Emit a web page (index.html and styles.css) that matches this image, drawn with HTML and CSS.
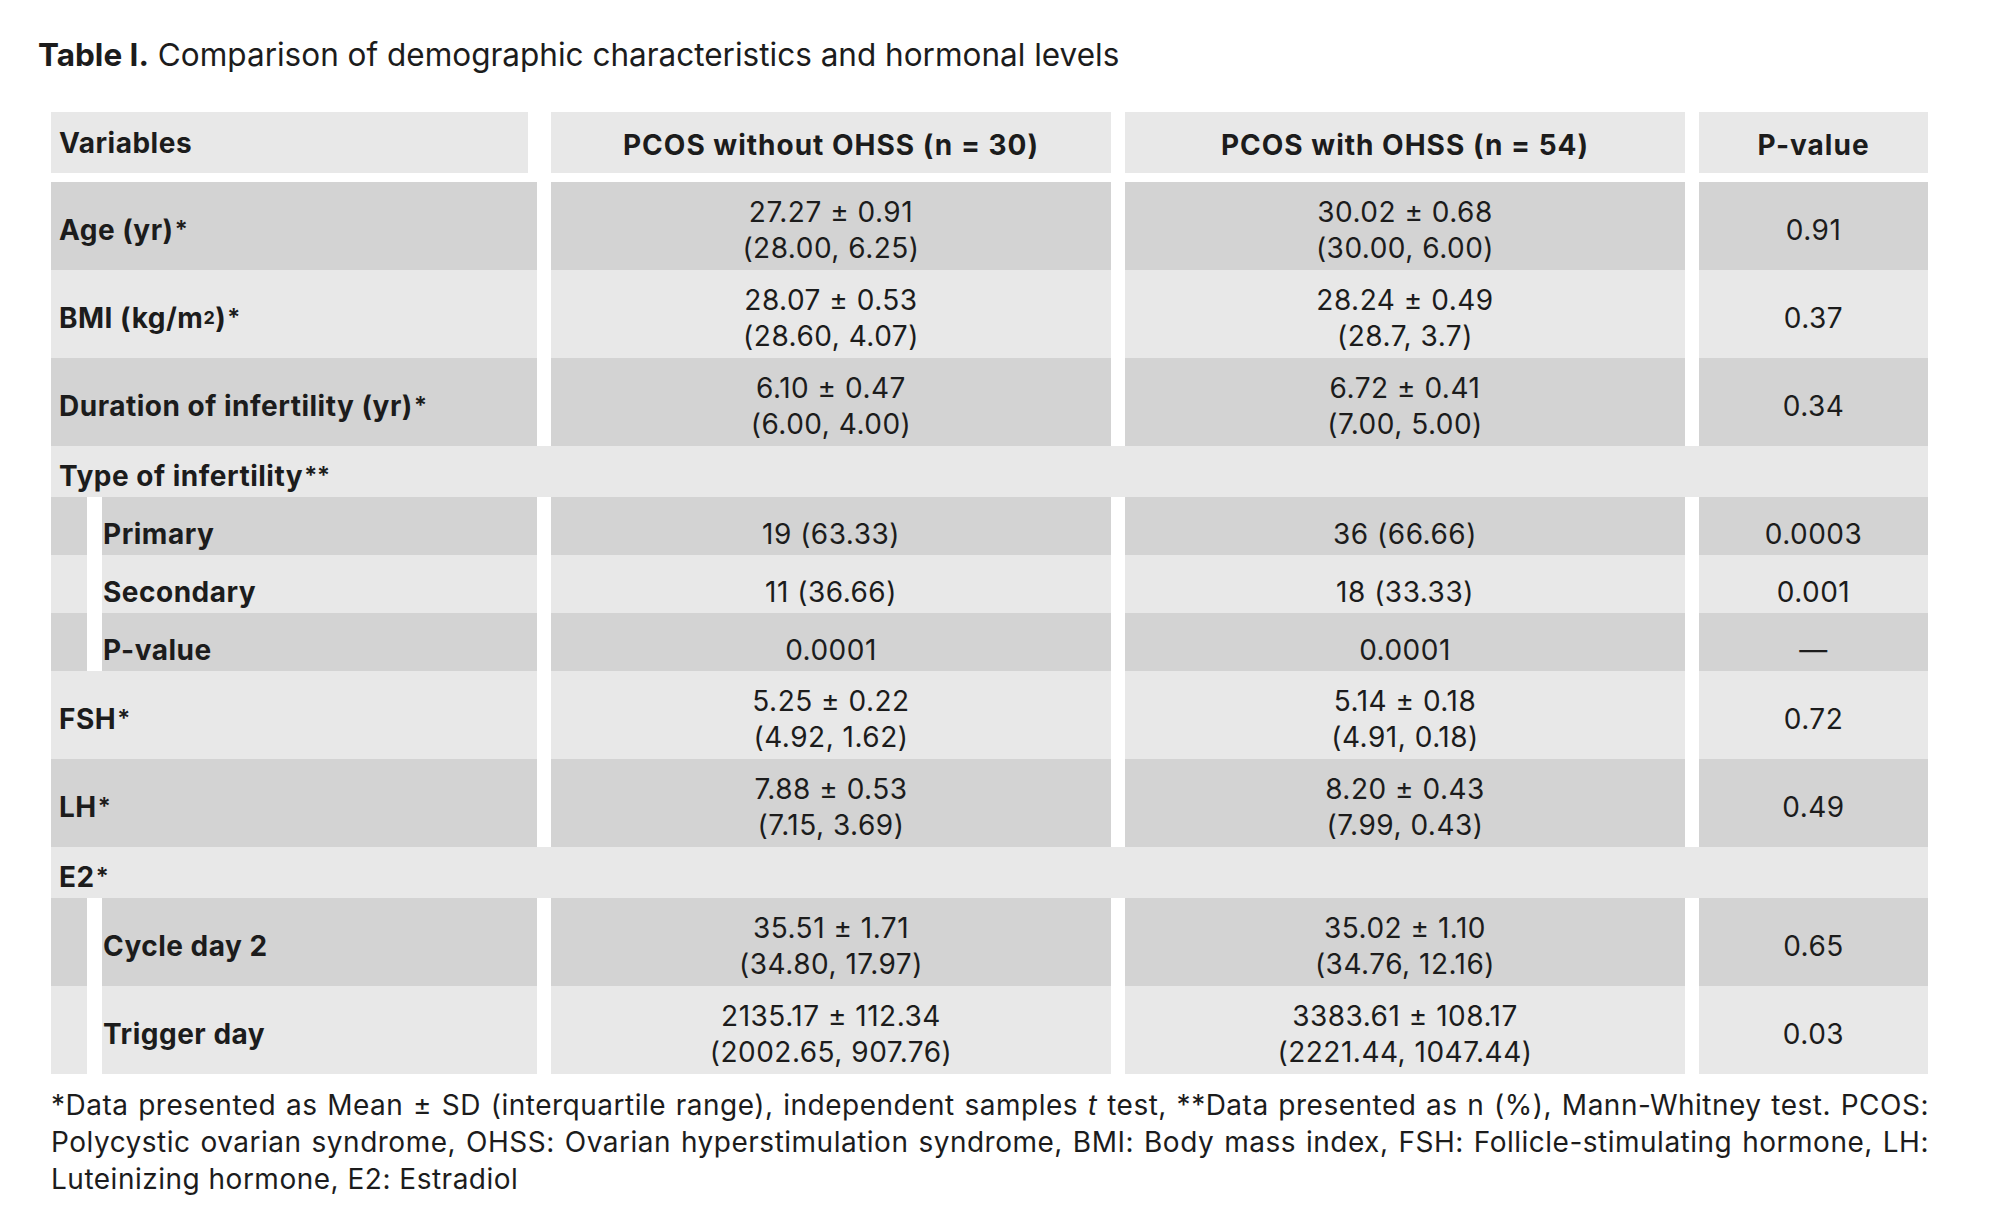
FILE: index.html
```html
<!DOCTYPE html>
<html lang="en">
<head>
<meta charset="utf-8">
<title>Table I</title>
<link rel="stylesheet" href="styles.css">
</head>
<body>
<div class="page">
  <h1 class="title"><b>Table I.</b> Comparison of demographic characteristics and hormonal levels</h1>
  <div class="tbl">
    <div class="row head">
      <div class="c c1">Variables</div>
      <div class="c">PCOS without OHSS (n = 30)</div>
      <div class="c">PCOS with OHSS (n = 54)</div>
      <div class="c">P-value</div>
    </div>
    <div class="row dark two">
      <div class="c c1">Age (yr)<span class="ast">*</span></div>
      <div class="c">27.27 ± 0.91<br>(28.00, 6.25)</div>
      <div class="c">30.02 ± 0.68<br>(30.00, 6.00)</div>
      <div class="c">0.91</div>
    </div>
    <div class="row light two">
      <div class="c c1">BMI (kg/m<sup>2</sup>)<span class="ast">*</span></div>
      <div class="c">28.07 ± 0.53<br>(28.60, 4.07)</div>
      <div class="c">28.24 ± 0.49<br>(28.7, 3.7)</div>
      <div class="c">0.37</div>
    </div>
    <div class="row dark two">
      <div class="c c1">Duration of infertility (yr)<span class="ast">*</span></div>
      <div class="c">6.10 ± 0.47<br>(6.00, 4.00)</div>
      <div class="c">6.72 ± 0.41<br>(7.00, 5.00)</div>
      <div class="c">0.34</div>
    </div>
    <div class="row light section">
      <div class="c c1 span">Type of infertility<span class="ast">**</span></div>
    </div>
    <div class="row dark sub">
      <div class="c c1 subcell"><span class="indent"></span><span class="lbl">Primary</span></div>
      <div class="c">19 (63.33)</div>
      <div class="c">36 (66.66)</div>
      <div class="c">0.0003</div>
    </div>
    <div class="row light sub">
      <div class="c c1 subcell"><span class="indent"></span><span class="lbl">Secondary</span></div>
      <div class="c">11 (36.66)</div>
      <div class="c">18 (33.33)</div>
      <div class="c">0.001</div>
    </div>
    <div class="row dark sub">
      <div class="c c1 subcell"><span class="indent"></span><span class="lbl">P-value</span></div>
      <div class="c">0.0001</div>
      <div class="c">0.0001</div>
      <div class="c">—</div>
    </div>
    <div class="row light two">
      <div class="c c1">FSH<span class="ast">*</span></div>
      <div class="c">5.25 ± 0.22<br>(4.92, 1.62)</div>
      <div class="c">5.14 ± 0.18<br>(4.91, 0.18)</div>
      <div class="c">0.72</div>
    </div>
    <div class="row dark two">
      <div class="c c1">LH<span class="ast">*</span></div>
      <div class="c">7.88 ± 0.53<br>(7.15, 3.69)</div>
      <div class="c">8.20 ± 0.43<br>(7.99, 0.43)</div>
      <div class="c">0.49</div>
    </div>
    <div class="row light section">
      <div class="c c1 span">E2<span class="ast">*</span></div>
    </div>
    <div class="row dark two">
      <div class="c c1 subcell"><span class="indent"></span><span class="lbl">Cycle day 2</span></div>
      <div class="c">35.51 ± 1.71<br>(34.80, 17.97)</div>
      <div class="c">35.02 ± 1.10<br>(34.76, 12.16)</div>
      <div class="c">0.65</div>
    </div>
    <div class="row light two">
      <div class="c c1 subcell"><span class="indent"></span><span class="lbl">Trigger day</span></div>
      <div class="c">2135.17 ± 112.34<br>(2002.65, 907.76)</div>
      <div class="c">3383.61 ± 108.17<br>(2221.44, 1047.44)</div>
      <div class="c">0.03</div>
    </div>
  </div>
  <p class="note">*Data presented as Mean ± SD (interquartile range), independent samples <span class="it">t</span> test, **Data presented as n (%), Mann-Whitney test. PCOS: Polycystic ovarian syndrome, OHSS: Ovarian hyperstimulation syndrome, BMI: Body mass index, FSH: Follicle-stimulating hormone, LH: Luteinizing hormone, E2: Estradiol</p>
</div>
</body>
</html>
```

FILE: styles.css
```css
html, body {
  margin: 0;
  padding: 0;
  background: #ffffff;
}

body {
  font-family: "Inter", "Liberation Sans", sans-serif;
  color: #1c1c1c;
  width: 2000px;
  height: 1216px;
  overflow: hidden;
}

.page {
  padding: 35px 71px 0 51px;
}

.title {
  margin: 0 0 37px -13px;
  font-size: 31.5px;
  font-weight: 400;
  line-height: 40px;
}

.title b {
  font-weight: 700;
}

.tbl {
  display: flex;
  flex-direction: column;
  width: 1878px;
}

.row {
  display: grid;
  grid-template-columns: 486px 560px 560px 229px;
  column-gap: 14px;
  --bg: #e8e8e8;
}

.row.dark {
  --bg: #d3d3d3;
}

.row.light,
.row.head {
  --bg: #e8e8e8;
}

.c {
  background: var(--bg);
  display: flex;
  align-items: center;
  justify-content: center;
  text-align: center;
  font-size: 28px;
  letter-spacing: 0.5px;
  line-height: 36px;
  padding-top: 8px;
}

.c1 {
  justify-content: flex-start;
  text-align: left;
  padding-left: 8px;
  font-weight: 700;
}

.head {
  height: 61px;
  margin-bottom: 9px;
}

.head .c {
  font-weight: 700;
  letter-spacing: 1px;
  padding-top: 5px;
}

.head .c1 {
  margin-right: 9px;
  padding-top: 0;
  letter-spacing: 0.5px;
}

.two {
  height: 88px;
}

.sub {
  height: 58px;
}

.sub .c {
  padding-top: 16px;
}

.section {
  height: 51px;
}

.section .span {
  grid-column: 1 / -1;
}

.subcell,
.sub .subcell {
  background: none;
  padding-left: 0;
  padding-top: 0;
  align-items: stretch;
  gap: 15px;
}

.subcell .indent {
  width: 36px;
  flex: none;
  background: var(--bg);
}

.subcell .lbl {
  flex: 1;
  background: var(--bg);
  display: flex;
  align-items: center;
  padding-left: 1px;
  padding-top: 8px;
}

.sub .subcell .lbl {
  padding-top: 16px;
}

.ast {
  font-size: 24px;
  font-weight: 600;
  vertical-align: 8px;
  line-height: 0;
  margin-left: 1px;
  letter-spacing: 0;
}

sup {
  font-size: 18px;
  line-height: 0;
  vertical-align: 11px;
}

.note {
  margin: 13px 0 0 0;
  font-size: 28px;
  letter-spacing: 0.5px;
  line-height: 37px;
  text-align: justify;
}

.it {
  font-style: italic;
}
```
